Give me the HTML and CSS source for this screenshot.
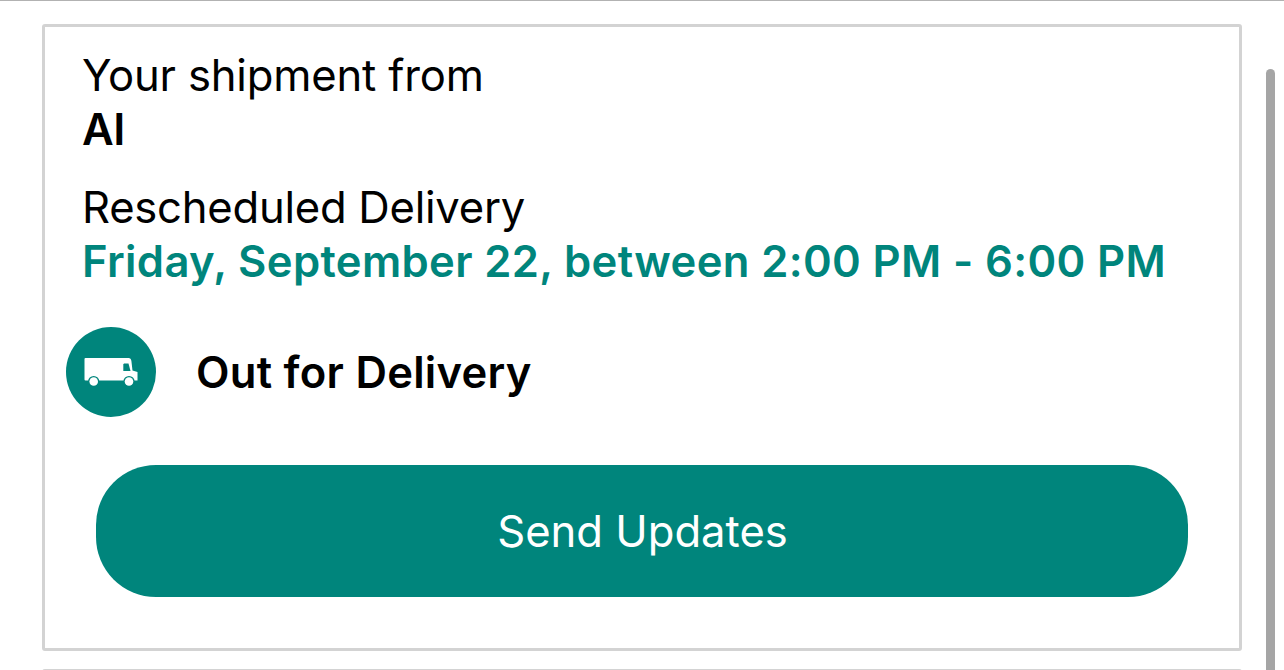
FILE: index.html
```html
<!DOCTYPE html>
<html lang="en">

<head>
    <meta charset="utf-8">
    <title>Shipment</title>
    <link rel="stylesheet" href="styles.css">
</head>

<body>
    <div class="page">
        <div class="card">
            <div class="info">
                <div class="from">Your shipment from</div>
                <div class="bold sender">AI</div>
            </div>
            <div class="info">
                <div class="label">Rescheduled Delivery</div>
                <div class="bold date">Friday, September 22, between 2:00 PM - 6:00 PM</div>
            </div>
            <div class="status">
                <!-- delivery truck -->
                <svg class="truck" width="90" height="90" viewBox="0 0 90 90">
                    <circle cx="45" cy="45" r="45" fill="#00857c" />
                    <path fill="#fff" d="M19.5 31H62.500Q65 31 65.400 34L66.500 43.500L71.500 45V53.500H19.500Q18.500 53.500 18.500 52.500V32Q18.500 31 19.500 31Z" />
                    <path fill="#00857c" d="M58 36.500H62.500L64.500 44H57.300V37.500Z" />
                    <circle cx="27.700" cy="54.500" r="5.600" fill="#00857c" />
                    <circle cx="63" cy="54.500" r="5.600" fill="#00857c" />
                    <circle cx="27.700" cy="54.500" r="4.300" fill="#fff" />
                    <circle cx="63" cy="54.500" r="4.300" fill="#fff" />
                </svg>
                <div class="bold state">Out for Delivery</div>
            </div>
            <button class="send">Send Updates</button>
        </div>
        <div class="card next"></div>
        <div class="scrollbar"></div>
    </div>
</body>

</html>
```
FILE: styles.css
```css
* {
    box-sizing: border-box;
}

body {
    margin: 0;
    background-color: white;
    font-family: Inter, "Liberation Sans", sans-serif;
    font-size: 43.6px;
    line-height: 54px;
    color: black;
}

.page {
    position: relative;
    height: 670px;
    overflow: hidden;
    border-top: 1px solid #b2b2b2;
    padding: 23px 42px 0;
}

.card {
    height: 627px;
    border: 3px solid #d3d3d3;
    border-radius: 3px;
    padding: 22px 36px 0 37px;
    white-space: nowrap;
}

.next {
    margin-top: 18px;
}

.info {
    margin-bottom: 24px;
}

.bold {
    font-weight: 600;
}

.from {
    letter-spacing: -0.18px;
}

.sender {
    letter-spacing: -0.5px;
}

.label {
    letter-spacing: -0.25px;
}

.date {
    color: #00857c;
    letter-spacing: 0.36px;
}

.status {
    display: flex;
    align-items: center;
    margin: 38px 0 48px -16px;
    gap: 40px;
}

.state {
    padding-top: 2px;
    letter-spacing: 0.26px;
}

.truck {
    display: block;
}

.send {
    display: block;
    width: 1092px;
    height: 132px;
    margin-left: 14px;
    padding: 2px 0 0 1px;
    border: none;
    border-radius: 60px;
    background-color: #00857c;
    color: white;
    font: inherit;
}

.scrollbar {
    position: absolute;
    top: 68px;
    right: 9px;
    width: 9px;
    height: 700px;
    border-radius: 5px;
    background-color: #a5a5a5;
}
```
